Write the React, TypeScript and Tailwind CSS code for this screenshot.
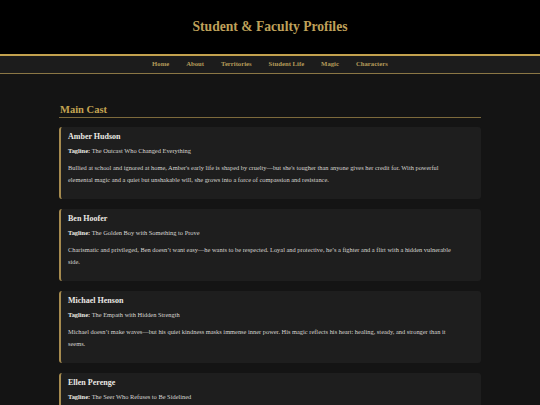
import React from "react";

const cast = [
  {
    name: "Amber Hudson",
    tagline: "The Outcast Who Changed Everything",
    text: "Bullied at school and ignored at home, Amber's early life is shaped by cruelty\u2014but she's tougher than anyone gives her credit for. With powerful elemental magic and a quiet but unshakable will, she grows into a force of compassion and resistance.",
  },
  {
    name: "Ben Hoofer",
    tagline: "The Golden Boy with Something to Prove",
    text: "Charismatic and privileged, Ben doesn\u2019t want easy\u2014he wants to be respected. Loyal and protective, he\u2019s a fighter and a flirt with a hidden vulnerable side.",
  },
  {
    name: "Michael Henson",
    tagline: "The Empath with Hidden Strength",
    text: "Michael doesn\u2019t make waves\u2014but his quiet kindness masks immense inner power. His magic reflects his heart: healing, steady, and stronger than it seems.",
  },
  {
    name: "Ellen Perenge",
    tagline: "The Seer Who Refuses to Be Sidelined",
    text: "Ellen sees what others miss, and she refuses to stay quiet about it.",
  },
];

const links = ["Home", "About", "Territories", "Student Life", "Magic", "Characters"];

export default function App() {
  return (
    <div
      className="h-[405px] w-[540px] bg-[#141414] overflow-hidden"
      style={{ fontFamily: '"Liberation Serif", "Times New Roman", serif' }}
    >
      <header className="bg-black h-[56px] flex items-center justify-center border-b-2 border-[#c2a14e]">
        <h1 className="text-[13.6px] font-bold text-[#bfa15a] leading-none">Student &amp; Faculty Profiles</h1>
      </header>
      <nav className="bg-[#1c1c1c] h-[18px] flex items-center justify-center gap-[17px] border-b border-[#8b7745]">
        {links.map((l) => (
          <span key={l} className="text-[6.7px] font-bold text-[#b59b5a] leading-none">
            {l}
          </span>
        ))}
      </nav>
      <main className="w-[422px] mx-auto pt-[30px]">
        <h2 className="text-[10.5px] font-bold text-[#c4a452] leading-[12px] pl-[1px] pb-[1px] border-b border-[#7d6a3c]">
          Main Cast
        </h2>
        <div className="flex flex-col gap-[10px] mt-[9px]">
          {cast.map((c) => (
            <div
              key={c.name}
              className="bg-[#1e1e1e] border-l-2 border-[#a68b4f] rounded-[3px] pl-[7px] pr-[18px] pt-[5px] pb-[13px]"
            >
              <h3 className="text-[8px] font-bold text-[#ebe9e4] leading-[10px]">{c.name}</h3>
              <div className="text-[6.4px] text-[#d8d6d2] leading-[10px] mt-[4px]">
                <span className="font-bold text-[#ebe9e4]">Tagline:</span> {c.tagline}
              </div>
              <p className="text-[6.4px] text-[#d6d4d0] leading-[12px] mt-[6px]">{c.text}</p>
            </div>
          ))}
        </div>
      </main>
    </div>
  );
}
